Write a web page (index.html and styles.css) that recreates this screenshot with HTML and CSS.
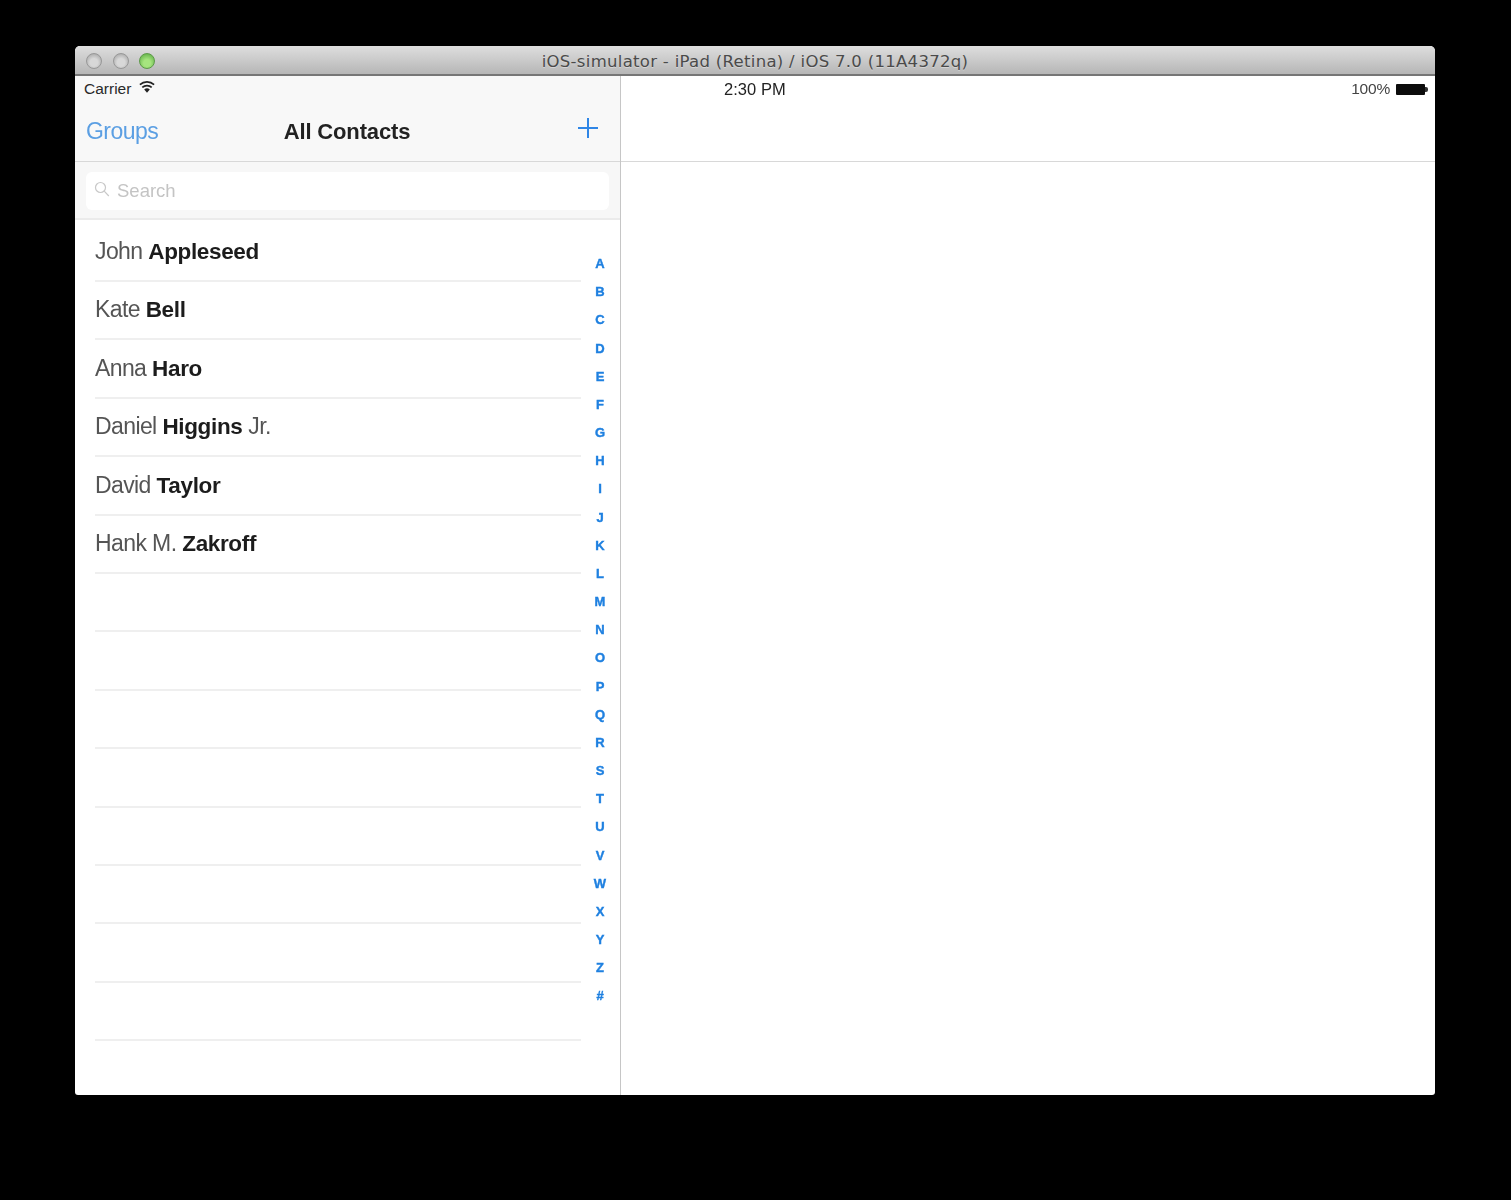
FILE: index.html
```html
<!DOCTYPE html>
<html lang="en">
<head>
<meta charset="utf-8">
<title>iOS-simulator</title>
<link rel="stylesheet" href="styles.css">
</head>
<body>
<div class="window">
  <header class="titlebar">
    <div class="lights">
      <span class="light"></span>
      <span class="light"></span>
      <span class="light light-green"></span>
    </div>
    <div class="title">iOS-simulator - iPad (Retina) / iOS 7.0 (11A4372q)</div>
  </header>
  <div class="screen">
    <aside class="master">
      <div class="bars">
        <div class="status-left">
          <span>Carrier</span>
          <svg class="wifi" viewBox="0 0 16 12" width="16" height="12" aria-hidden="true">
            <path d="M8 11.8 5.2 8.4a4.2 4.2 0 0 1 5.6 0Z" fill="#222"/>
            <path d="M3.3 6.4a7 7 0 0 1 9.4 0" fill="none" stroke="#222" stroke-width="1.7"/>
            <path d="M.9 3.6a10.6 10.6 0 0 1 14.2 0" fill="none" stroke="#222" stroke-width="1.7"/>
          </svg>
        </div>
        <nav class="navbar">
          <span class="nav-back">Groups</span>
          <span class="nav-title">All Contacts</span>
          <svg class="nav-add" viewBox="0 0 22 22" width="22" height="22" aria-hidden="true">
            <path d="M11 1v20M1 11h20" stroke="#2f86e6" stroke-width="2" fill="none"/>
          </svg>
        </nav>
      </div>
      <div class="searchbar">
        <div class="searchfield">
          <svg class="search-icon" viewBox="0 0 16 16" width="16" height="16" aria-hidden="true">
            <circle cx="6.5" cy="6.5" r="5" fill="none" stroke="#c8c8c8" stroke-width="1.2"/>
            <path d="m10.2 10.2 4.6 4.8" stroke="#c8c8c8" stroke-width="1.2" fill="none"/>
          </svg>
          <span>Search</span>
        </div>
      </div>
      <div class="list-area">
        <ul class="contacts">
          <li class="contact">John <b>Appleseed</b></li>
          <li class="contact">Kate <b>Bell</b></li>
          <li class="contact">Anna <b>Haro</b></li>
          <li class="contact">Daniel <b>Higgins</b> Jr.</li>
          <li class="contact">David <b>Taylor</b></li>
          <li class="contact">Hank M. <b>Zakroff</b></li>
          <li class="contact"></li>
          <li class="contact"></li>
          <li class="contact"></li>
          <li class="contact"></li>
          <li class="contact"></li>
          <li class="contact"></li>
          <li class="contact"></li>
          <li class="contact"></li>
        </ul>
        <ol class="index">
          <li>A</li><li>B</li><li>C</li><li>D</li><li>E</li><li>F</li><li>G</li><li>H</li><li>I</li>
          <li>J</li><li>K</li><li>L</li><li>M</li><li>N</li><li>O</li><li>P</li><li>Q</li><li>R</li>
          <li>S</li><li>T</li><li>U</li><li>V</li><li>W</li><li>X</li><li>Y</li><li>Z</li><li>#</li>
        </ol>
      </div>
    </aside>
    <main class="detail">
      <div class="detail-bar">
        <span class="status-time">2:30 PM</span>
        <div class="status-right">
          <span>100%</span>
          <span class="battery"><span class="battery-cap"></span></span>
        </div>
      </div>
    </main>
  </div>
</div>
</body>
</html>
```

FILE: styles.css
```css
* { box-sizing: border-box; }

html, body { margin: 0; height: 100%; }

body {
  background: #000;
  font-family: "Liberation Sans", Arial, sans-serif;
  padding: 46px 76px 105px 75px;
  height: 1200px;
  overflow: hidden;
}

.window {
  height: 1049px;
  display: flex;
  flex-direction: column;
  background: #fff;
  border-radius: 5px 5px 3px 3px;
  overflow: hidden;
  filter: blur(0.6px);
}

.titlebar {
  position: relative;
  height: 30px;
  flex: none;
  background: linear-gradient(#dedede, #b6b6b6);
  border-bottom: 2px solid #767676;
  display: flex;
  align-items: center;
  justify-content: center;
  padding-top: 2px;
}

.lights {
  position: absolute;
  left: 11px;
  top: 7px;
  display: flex;
  gap: 10.5px;
}

.light {
  width: 16px;
  height: 16px;
  border-radius: 50%;
  background: radial-gradient(circle at 50% 60%, #d8d8d8 35%, #a4a4a4 90%);
  border: 1px solid #989898;
}

.light-green {
  background: radial-gradient(circle at 50% 65%, #a6e57f 30%, #5fae46 90%);
  border-color: #5c9a48;
}

.title {
  font-family: "DejaVu Sans", sans-serif;
  font-size: 16.5px;
  letter-spacing: 0.3px;
  color: #4a4a4a;
  text-shadow: 0 1px 0 rgba(255, 255, 255, 0.35);
}

.screen {
  flex: 1;
  display: flex;
  min-height: 0;
}

.master {
  width: 546px;
  flex: none;
  display: flex;
  flex-direction: column;
  border-right: 1px solid #c6c6c6;
}

.bars {
  height: 86px;
  flex: none;
  background: #f8f8f8;
  border-bottom: 1px solid #d8d8d8;
  display: flex;
  flex-direction: column;
}

.status-left {
  height: 26px;
  flex: none;
  padding: 0 0 0 9px;
  display: flex;
  align-items: center;
  gap: 8px;
  font-size: 15.5px;
  letter-spacing: 0;
  color: #2a2a2a;
}

.wifi { margin-bottom: 4px; }

.navbar {
  flex: 1;
  position: relative;
  display: flex;
  align-items: center;
  justify-content: space-between;
  padding: 0 21px 0 11px;
}

.nav-back {
  font-size: 23px;
  letter-spacing: -0.55px;
  color: #5b9fe3;
}

.nav-title {
  position: absolute;
  left: 0;
  right: 0;
  top: 16px;
  text-align: center;
  font-size: 22px;
  line-height: 28px;
  font-weight: 700;
  letter-spacing: -0.15px;
  color: #222;
  padding-right: 1px;
}

.nav-add { margin-bottom: 7px; }

.searchbar {
  height: 58px;
  flex: none;
  background: #f7f7f7;
  border-bottom: 2px solid #ebebeb;
  padding: 10px 11px 0;
}

.searchfield {
  height: 38px;
  background: #fff;
  border-radius: 6px;
  display: flex;
  align-items: center;
  gap: 7px;
  padding-left: 8px;
  font-size: 18.5px;
  color: #c4c4c4;
}

.search-icon { margin-bottom: 5px; }

.list-area {
  flex: 1;
  position: relative;
  min-height: 0;
}

.contacts {
  list-style: none;
  margin: 0;
  padding: 3.6px 0 0;
}

.contact {
  height: 58.4px;
  margin-left: 20px;
  margin-right: 39px;
  border-bottom: 2px solid #efefef;
  padding-top: 13.5px;
  font-size: 23px;
  line-height: 28px;
  letter-spacing: -0.6px;
  color: #555;
}

.contact b {
  font-size: 22.5px;
  font-weight: 700;
  letter-spacing: -0.35px;
  color: #1c1c1c;
}

.index {
  position: absolute;
  top: 30px;
  right: 6px;
  width: 28px;
  margin: 0;
  padding: 0;
  list-style: none;
  text-align: center;
  font-size: 13px;
  font-weight: 700;
  color: #1f80e0;
  -webkit-text-stroke: 0.4px #1f80e0;
}

.index li {
  height: 28.18px;
  line-height: 28px;
}

.detail {
  flex: 1;
  min-width: 0;
}

.detail-bar {
  height: 86px;
  position: relative;
  border-bottom: 1px solid #d8d8d8;
}

.status-time {
  position: absolute;
  left: 103px;
  top: 2px;
  font-size: 16.5px;
  letter-spacing: 0.05px;
  line-height: 22px;
  color: #222;
}

.status-right {
  height: 26px;
  display: flex;
  align-items: center;
  justify-content: flex-end;
  gap: 6px;
  padding-right: 7px;
  font-size: 15.5px;
  letter-spacing: -0.2px;
  color: #444;
}

.battery {
  position: relative;
  width: 29px;
  height: 11px;
  background: #0c0c0c;
  border-radius: 1px;
  margin-right: 3px;
}

.battery-cap {
  position: absolute;
  right: -3px;
  top: 3px;
  width: 3px;
  height: 5px;
  background: #333;
  border-radius: 0 2px 2px 0;
}
```
